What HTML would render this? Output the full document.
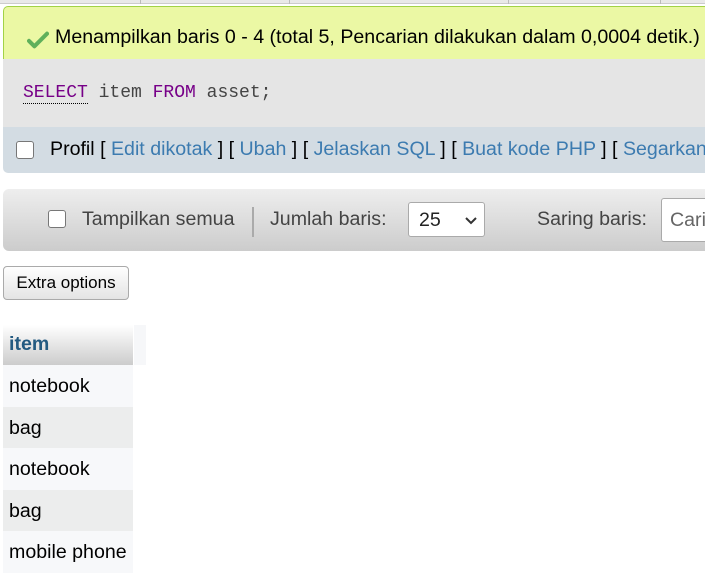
<!DOCTYPE html>
<html><head><meta charset="utf-8"><style>
*{margin:0;padding:0;box-sizing:border-box}
body{width:705px;height:586px;overflow:hidden;background:#fff;font-family:"Liberation Sans",Arial,sans-serif;color:#000;position:relative}
.abs{position:absolute}
#topline{left:0;top:0;width:705px;height:4px;background:#e9e9e9;border-bottom:1px solid #ccc}
.vl{top:0;width:1px;height:4px;background:#bbb}
#ok{left:3px;top:6px;width:720px;height:54px;background:#ebf8a4;border:1px solid #a2d246;border-bottom:none;border-radius:5px 5px 0 0;font-size:19.6px;line-height:20px}
#ok span{position:absolute;left:51px;top:20px;white-space:nowrap}
#ok svg{position:absolute;left:23px;top:24px}
#sql{left:3px;top:59px;width:720px;height:69px;background:#e5e5e5;font-family:"Liberation Mono",monospace;font-size:18px}
#sql div{position:absolute;left:20px;top:24px;white-space:nowrap;color:#444}
.kw{color:#770088}
.u{border-bottom:1px dotted #000}
#links{left:3px;top:127px;width:720px;height:46px;background:#d3dce3;border-radius:0 0 0 5px;font-size:19.6px}
#links .t{position:absolute;left:47px;top:11px;white-space:nowrap}
a{color:#3c7bb0;text-decoration:none}
.cb{position:absolute;width:18px;height:18px;border:1.5px solid #777;border-radius:3px;background:#fff}
#bar{left:3px;top:189px;width:720px;height:62px;border-radius:6px 0 0 6px;background:linear-gradient(#eeeeee,#cccccc);font-size:19.6px;color:#444}
#bar .x{position:absolute;top:19px;white-space:nowrap}
#sel{left:405px;top:13px;width:77px;height:35px;background:#fff;border:1px solid #aaa;border-radius:3px}
#btn{left:3px;top:266px;width:126px;height:34px;border:1px solid #aaa;border-radius:4px;background:linear-gradient(#fefefe,#e4e4e4);font-size:17px;text-align:center;line-height:32px}
#th{left:3px;top:325px;width:130px;height:40px;background:linear-gradient(#fff,#ccc);font-weight:bold;font-size:19.6px;color:#235a81;padding:8px 6px}
#th2{left:134px;top:325px;width:12px;height:40px;background:#f6f7f9}
.r{position:absolute;left:3px;width:130px;height:42px;font-size:19.6px;padding:10px 6px 0;white-space:nowrap}
</style></head><body>
<div class="abs" id="topline"></div>
<div class="abs vl" style="left:140px"></div><div class="abs vl" style="left:289px"></div><div class="abs vl" style="left:508px"></div><div class="abs vl" style="left:660px"></div>
<div class="abs" id="ok"><svg width="22" height="18" viewBox="0 0 24 20"><path d="M2 11 L8 17 L22 3" fill="none" stroke="#5fb05b" stroke-width="4.5" stroke-linecap="round" stroke-linejoin="round"/></svg><span>Menampilkan baris 0 - 4 (total 5, Pencarian dilakukan dalam 0,0004 detik.)</span></div>
<div class="abs" id="sql"><div><span class="kw u">SELECT</span> item <span class="kw">FROM</span> asset;</div></div>
<div class="abs" id="links"><div class="cb" style="left:13px;top:14px"></div><div class="t">Profil [ <a>Edit dikotak</a> ] [ <a>Ubah</a> ] [ <a>Jelaskan SQL</a> ] [ <a>Buat kode PHP</a> ] [ <a>Segarkan</a> ]</div></div>
<div class="abs" id="bar">
<div class="cb" style="left:45px;top:21px"></div>
<div class="x" style="left:79px">Tampilkan semua</div>
<div class="abs" style="left:249px;top:18px;width:2px;height:30px;background:#aaa"></div>
<div class="x" style="left:267px">Jumlah baris:</div>
<div class="abs" id="sel"><span style="position:absolute;left:10px;top:6px;color:#222">25</span><svg style="position:absolute;left:55px;top:13px" width="14" height="9" viewBox="0 0 14 9"><path d="M2 2 L7 7 L12 2" fill="none" stroke="#333" stroke-width="2"/></svg></div>
<div class="x" style="left:534px">Saring baris:</div>
<div class="abs" style="left:658px;top:9px;width:80px;height:44px;background:#fff;border:1px solid #aaa;border-radius:3px"><span style="position:absolute;left:8px;top:10px;color:#666">Cari</span></div>
</div>
<div class="abs" id="btn">Extra options</div>
<div class="abs" id="th">item</div><div class="abs" id="th2"></div>
<div class="r" style="top:365px;background:#f7f8fa">notebook</div>
<div class="r" style="top:407px;background:#eceded">bag</div>
<div class="r" style="top:448px;background:#f7f8fa">notebook</div>
<div class="r" style="top:490px;background:#eceded">bag</div>
<div class="r" style="top:531px;background:#f7f8fa">mobile phone</div>
</body></html>
